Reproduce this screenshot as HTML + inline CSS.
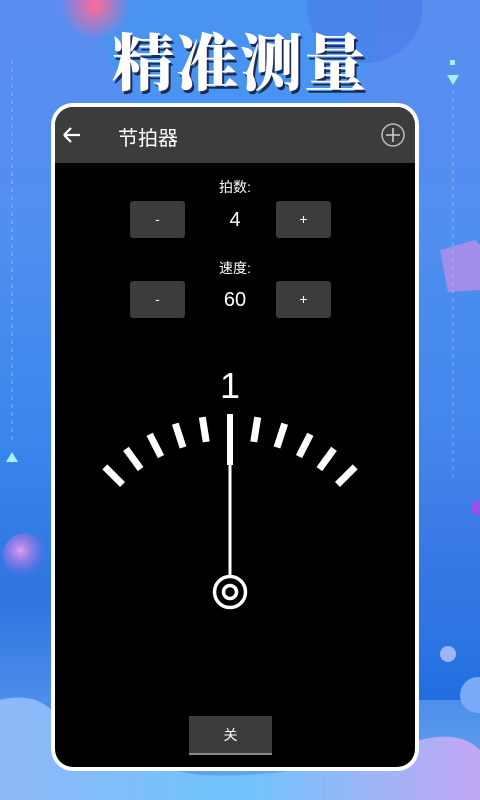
<!DOCTYPE html>
<html><head><meta charset="utf-8"><style>
html,body{margin:0;padding:0}
body{width:480px;height:800px;overflow:hidden;position:relative;font-family:"Liberation Sans","Noto Sans CJK SC",sans-serif;
background:linear-gradient(180deg,#5b8df0 0%,#4f8ff0 30%,#3a86ec 55%,#2f74e0 75%,#6aa8f4 100%);}
.bg{position:absolute;inset:0}
.title{position:absolute;left:0;width:480px;top:14px;text-align:center;font-family:"Noto Serif CJK SC",serif;font-weight:900;font-size:62px;color:#fff;letter-spacing:2px;text-shadow:2px 3px 0 #1c2a55;}
.frame{position:absolute;left:51px;top:103px;width:368px;height:668px;background:#fff;border-radius:22px}
.screen{position:absolute;left:55px;top:107px;width:360px;height:660px;background:#000;border-radius:18px;overflow:hidden}
.hdr{position:absolute;left:0;top:0;width:360px;height:56px;background:#3c3c3c}
.hdr .t{position:absolute;left:63px;top:15px;color:#fff;font-size:20px}
.btn{position:absolute;width:55px;height:37px;background:#3c3c3c;border-radius:3px;color:#fff;font-size:14px;text-align:center;line-height:37px}
.lbl{position:absolute;width:360px;text-align:center;color:#fff;font-size:14px}
.val{position:absolute;width:360px;text-align:center;color:#fff;font-size:20px}
</style></head><body>
<svg class="bg" width="480" height="800">
<defs>
<radialGradient id="rb" cx="0.5" cy="0.5" r="0.5"><stop offset="0" stop-color="#ff6a9a"/><stop offset="1" stop-color="#ff6a9a" stop-opacity="0"/></radialGradient>
<radialGradient id="pb" cx="0.4" cy="0.4" r="0.6"><stop offset="0" stop-color="#e59cf0"/><stop offset="1" stop-color="#a060e0" stop-opacity="0"/></radialGradient>
<linearGradient id="bot" x1="0" y1="0" x2="1" y2="0"><stop offset="0" stop-color="#8fb8f8"/><stop offset="0.5" stop-color="#6ec4fb"/><stop offset="1" stop-color="#c3a8f4"/></linearGradient>
<linearGradient id="rside" x1="0" y1="0" x2="0" y2="1"><stop offset="0" stop-color="#6a8ff0" stop-opacity="0"/><stop offset="1" stop-color="#1f6de0"/></linearGradient>
</defs>
<circle cx="240" cy="10" r="140" fill="#3a9af0" opacity="0.5"/>
<circle cx="95" cy="5" r="35" fill="url(#rb)"/>
<circle cx="365" cy="5" r="58" fill="#4a7ae8" opacity="0.6"/>
<rect x="415" y="300" width="65" height="400" fill="url(#rside)"/>
<circle cx="25" cy="555" r="22" fill="url(#pb)"/>
<path d="M440 250 L475 240 L480 245 L480 290 L448 292Z" fill="#c48ee8" opacity="0.7"/>
<circle cx="478" cy="508" r="7" fill="#9a50f0"/>
<circle cx="448" cy="654" r="8" fill="#9cb6f6"/>
<circle cx="478" cy="695" r="18" fill="#79aaf8"/>
<path d="M0 700 Q40 690 60 720 Q100 760 200 775 Q300 780 420 740 Q460 730 480 750 L480 800 L0 800Z" fill="url(#bot)"/>
<line x1="12" y1="60" x2="12" y2="440" stroke="#9cc4fa" stroke-dasharray="4 4" opacity="0.7"/>
<line x1="453" y1="90" x2="453" y2="480" stroke="#9cc4fa" stroke-dasharray="4 4" opacity="0.7"/>
<rect x="450" y="60" width="5" height="5" fill="#a8f0ff"/>
<path d="M447 75 L459 75 L453 85Z" fill="#a8f0ff"/>
<path d="M6 462 L18 462 L12 452Z" fill="#a8f0ff"/>
</svg>
<div class="title">精准测量</div>
<div class="frame"></div>
<div class="screen">
 <div class="hdr">
  <svg width="360" height="56" style="position:absolute;left:0;top:0">
   <path d="M9 28 H25 M9 28 L16 21 M9 28 L16 35" stroke="#fff" stroke-width="2.2" fill="none"/>
   <circle cx="338" cy="28" r="11" stroke="#bbb" stroke-width="1.5" fill="none"/>
   <path d="M331 28 H345 M338 21 V35" stroke="#ccc" stroke-width="1.6"/>
  </svg>
  <div class="t">节拍器</div>
 </div>
 <div class="lbl" style="top:70px">拍数:</div>
 <div class="btn" style="left:75px;top:94px">-</div>
 <div class="val" style="top:102px">4</div>
 <div class="btn" style="left:221px;top:94px">+</div>
 <div class="lbl" style="top:151px">速度:</div>
 <div class="btn" style="left:75px;top:174px">-</div>
 <div class="val" style="top:182px">60</div>
 <div class="btn" style="left:221px;top:174px">+</div>
 <svg width="360" height="660" style="position:absolute;left:0;top:0">
  <g transform="translate(-55,-107)" stroke="#fff" fill="none">
   <text x="230" y="398" fill="#fff" stroke="none" font-size="36" text-anchor="middle" font-family="Liberation Sans, sans-serif">1</text>
   <g stroke-width="7">
    <line x1="230" y1="415" x2="230" y2="440" transform="rotate(-45 230 592)"/>
    <line x1="230" y1="415" x2="230" y2="440" transform="rotate(-36 230 592)"/>
    <line x1="230" y1="415" x2="230" y2="440" transform="rotate(-27 230 592)"/>
    <line x1="230" y1="415" x2="230" y2="440" transform="rotate(-18 230 592)"/>
    <line x1="230" y1="415" x2="230" y2="440" transform="rotate(-9 230 592)"/>
    <line x1="230" y1="415" x2="230" y2="440" transform="rotate(9 230 592)"/>
    <line x1="230" y1="415" x2="230" y2="440" transform="rotate(18 230 592)"/>
    <line x1="230" y1="415" x2="230" y2="440" transform="rotate(27 230 592)"/>
    <line x1="230" y1="415" x2="230" y2="440" transform="rotate(36 230 592)"/>
    <line x1="230" y1="415" x2="230" y2="440" transform="rotate(45 230 592)"/>
   </g>
   <line x1="230" y1="414" x2="230" y2="465" stroke-width="6"/>
   <line x1="230" y1="465" x2="230" y2="578" stroke-width="3"/>
   <circle cx="230" cy="592" r="15.5" stroke-width="3.5"/>
   <circle cx="230" cy="592" r="6.5" stroke-width="3.5"/>
  </g>
 </svg>
 <div style="position:absolute;left:134px;top:609px;width:83px;height:37px;background:#3c3c3c;border-bottom:2px solid #888;color:#fff;font-size:14px;text-align:center;line-height:38px">关</div>
</div>
</body></html>
